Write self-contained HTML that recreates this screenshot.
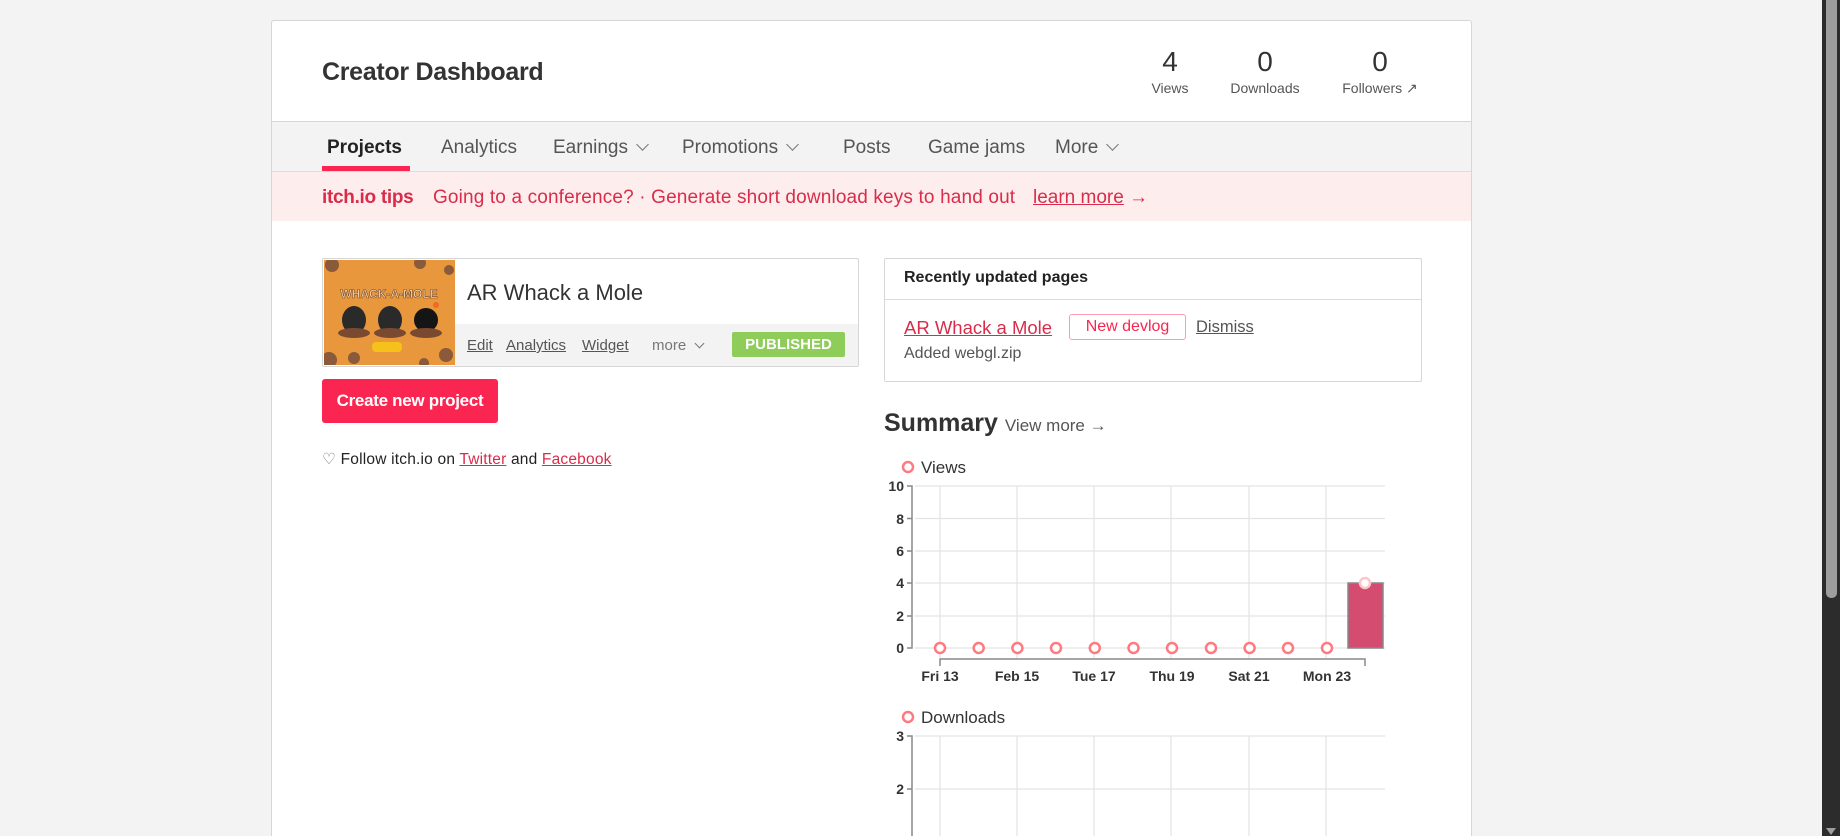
<!DOCTYPE html>
<html style="overflow:hidden;height:836px"><head><meta charset="utf-8"><style>
*{margin:0;padding:0;box-sizing:border-box}
body{width:1840px;height:836px;background:#f3f3f3;font-family:"Liberation Sans",sans-serif;color:#434343;position:relative;overflow:hidden}
.a{position:absolute;white-space:nowrap}
.panel{position:absolute;left:271px;top:20px;width:1201px;height:816px;background:#fff;border:1px solid #d6d6d6;border-bottom:0;border-radius:3px 3px 0 0}
.nav{position:absolute;left:272px;top:121px;width:1199px;height:51px;background:#f3f3f3;border-top:1px solid #d6d6d6;border-bottom:1px solid #dcdcdc}
.tips{position:absolute;left:272px;top:172px;width:1199px;height:49px;background:#fdeded}
.navi{font-size:19px;color:#555;top:137px}
.chev{display:inline-block;width:9px;height:9px;border-right:1.6px solid #777;border-bottom:1.6px solid #777;transform:rotate(45deg);margin-left:10px;position:relative;top:-4px}
.u{text-decoration:underline}
</style></head><body>
<div class="panel"></div>
<div class="a" style="left:322px;top:58px;font-size:25px;font-weight:bold;color:#333;letter-spacing:-0.3px">Creator Dashboard</div>

<div class="a" style="left:1120px;width:100px;text-align:center;top:46px;font-size:28px;color:#333">4</div>
<div class="a" style="left:1120px;width:100px;text-align:center;top:80px;font-size:14px;color:#555">Views</div>
<div class="a" style="left:1205px;width:120px;text-align:center;top:46px;font-size:28px;color:#333">0</div>
<div class="a" style="left:1205px;width:120px;text-align:center;top:80px;font-size:14px;color:#555">Downloads</div>
<div class="a" style="left:1320px;width:120px;text-align:center;top:46px;font-size:28px;color:#333">0</div>
<div class="a" style="left:1320px;width:120px;text-align:center;top:80px;font-size:14px;color:#555">Followers ↗</div>

<div class="nav"></div>
<div class="a navi" style="left:327px;font-weight:bold;color:#222">Projects</div>
<div class="a" style="left:322px;top:166px;width:88px;height:5px;background:#fa2550"></div>
<div class="a navi" style="left:441px">Analytics</div>
<div class="a navi" style="left:553px">Earnings<span class="chev"></span></div>
<div class="a navi" style="left:682px">Promotions<span class="chev"></span></div>
<div class="a navi" style="left:843px">Posts</div>
<div class="a navi" style="left:928px">Game jams</div>
<div class="a navi" style="left:1055px">More<span class="chev"></span></div>

<div class="tips"></div>
<div class="a" style="left:322px;top:187px;font-size:19px;font-weight:bold;color:#da2c4a;letter-spacing:-0.3px">itch.io tips</div>
<div class="a" style="left:433px;top:187px;font-size:19px;color:#da2c4a;letter-spacing:0.15px">Going to a conference? · Generate short download keys to hand out</div>
<div class="a" style="left:1033px;top:187px;font-size:19px;color:#da2c4a"><span class="u">learn more</span> →</div>

<!-- project card -->
<div class="a" style="left:322px;top:258px;width:537px;height:109px;border:1px solid #d6d6d6;border-radius:2px"></div>
<div class="a" style="left:455px;top:324px;width:403px;height:42px;background:#f3f3f3"></div>
<svg class="a" style="left:324px;top:260px" width="131" height="105" viewBox="0 0 131 105">
<rect width="131" height="105" fill="#e8973c"/>
<circle cx="8" cy="5" r="7" fill="#8a5a3a"/><circle cx="96" cy="3" r="6" fill="#8a5a3a"/><circle cx="125" cy="10" r="5" fill="#8a5a3a"/>
<circle cx="5" cy="100" r="8" fill="#8a5a3a"/><circle cx="30" cy="98" r="6" fill="#8a5a3a"/><circle cx="122" cy="95" r="7" fill="#8a5a3a"/><circle cx="100" cy="103" r="5" fill="#8a5a3a"/>
<text x="65" y="38" text-anchor="middle" font-size="12" font-weight="bold" fill="#f4d7b0" stroke="#7a4a2a" stroke-width=".6" font-family="Liberation Sans">WHACK-A-MOLE</text>
<ellipse cx="30" cy="60" rx="12" ry="14" fill="#2a2a2a"/><ellipse cx="30" cy="73" rx="16" ry="5" fill="#7a4a30"/>
<ellipse cx="66" cy="60" rx="12" ry="14" fill="#2a2a2a"/><ellipse cx="66" cy="73" rx="16" ry="5" fill="#7a4a30"/>
<circle cx="102" cy="60" r="12" fill="#151515"/><ellipse cx="102" cy="73" rx="16" ry="5" fill="#7a4a30"/>
<circle cx="112" cy="45" r="3" fill="#f06a20"/>
<rect x="48" y="82" width="30" height="10" rx="4" fill="#f5c11a"/>
</svg>
<div class="a" style="left:467px;top:280px;font-size:22px;color:#333">AR Whack a Mole</div>
<div class="a u" style="left:467px;top:337px;font-size:15px;color:#555">Edit</div>
<div class="a u" style="left:506px;top:337px;font-size:15px;color:#555">Analytics</div>
<div class="a u" style="left:582px;top:337px;font-size:15px;color:#555">Widget</div>
<div class="a" style="left:652px;top:337px;font-size:15px;color:#777">more<span class="chev" style="width:7px;height:7px;top:-3px"></span></div>
<div class="a" style="left:732px;top:332px;width:113px;height:25px;background:#8fcd5a;border-radius:2px;color:#fff;font-weight:bold;font-size:15px;text-align:center;line-height:25px">PUBLISHED</div>

<div class="a" style="left:322px;top:379px;width:176px;height:44px;background:#fa2550;border-radius:3px;color:#fff;font-weight:bold;font-size:17px;text-align:center;line-height:44px;letter-spacing:-0.3px">Create new project</div>
<div class="a" style="left:322px;top:450px;font-size:15.5px;color:#222;letter-spacing:0.2px"><span style="color:#777">♡</span> Follow itch.io on <span class="u" style="color:#da2c4a">Twitter</span> and <span class="u" style="color:#da2c4a">Facebook</span></div>

<!-- recent card -->
<div class="a" style="left:884px;top:258px;width:538px;height:124px;border:1px solid #d6d6d6;border-radius:2px"></div>
<div class="a" style="left:885px;top:299px;width:536px;height:1px;background:#dcdcdc"></div>
<div class="a" style="left:904px;top:269px;font-size:16px;font-weight:bold;color:#222">Recently updated pages</div>
<div class="a u" style="left:904px;top:317px;font-size:18.5px;color:#da2c4a">AR Whack a Mole</div>
<div class="a" style="left:1069px;top:314px;width:117px;height:26px;border:1px solid #ff9bb0;border-radius:3px;color:#fa2550;font-size:16px;text-align:center;line-height:24px">New devlog</div>
<div class="a u" style="left:1196px;top:318px;font-size:16.5px;color:#555">Dismiss</div>
<div class="a" style="left:904px;top:345px;font-size:16px;color:#555">Added webgl.zip</div>

<div class="a" style="left:884px;top:409px;font-size:25px;font-weight:bold;color:#333">Summary <span style="font-size:17px;font-weight:normal;color:#555">View more →</span></div>

<svg class="a" style="left:880px;top:455px" width="520" height="381">
<g font-family="Liberation Sans">
<circle cx="28" cy="12" r="5" fill="none" stroke="#ff7a80" stroke-width="2.5"/>
<text x="41" y="18" font-size="17" fill="#333">Views</text>
<g stroke="#e3e3e3" stroke-width="1.2">
<line x1="35" y1="31" x2="505" y2="31"/><line x1="35" y1="63.5" x2="505" y2="63.5"/><line x1="35" y1="96" x2="505" y2="96"/><line x1="35" y1="128" x2="505" y2="128"/><line x1="35" y1="161" x2="505" y2="161"/><line x1="35" y1="193" x2="505" y2="193"/>
<line x1="60" y1="31" x2="60" y2="203"/><line x1="137" y1="31" x2="137" y2="203"/><line x1="214" y1="31" x2="214" y2="203"/><line x1="291" y1="31" x2="291" y2="203"/><line x1="369" y1="31" x2="369" y2="203"/><line x1="446" y1="31" x2="446" y2="203"/>
</g>
<g stroke="#888" stroke-width="1.5" fill="none">
<path d="M27 31H32V193H27M27 63.5H32M27 96H32M27 128H32M27 161H32"/>
<path d="M60 211V204H485V211M60 204V211"/>
</g>
<g font-size="14" font-weight="bold" fill="#333" text-anchor="end">
<text x="24" y="36">10</text><text x="24" y="69">8</text><text x="24" y="101">6</text><text x="24" y="133">4</text><text x="24" y="166">2</text><text x="24" y="198">0</text>
</g>
<rect x="468" y="128" width="35" height="65" fill="#d44d71" stroke="#888" stroke-width="1.5"/>
<g fill="#fff" stroke="#ff7a80" stroke-width="2.5">
<circle cx="60" cy="193" r="5"/><circle cx="98.7" cy="193" r="5"/><circle cx="137.4" cy="193" r="5"/><circle cx="176" cy="193" r="5"/><circle cx="214.8" cy="193" r="5"/><circle cx="253.5" cy="193" r="5"/><circle cx="292" cy="193" r="5"/><circle cx="331" cy="193" r="5"/><circle cx="369.6" cy="193" r="5"/><circle cx="408" cy="193" r="5"/><circle cx="447" cy="193" r="5"/>
<circle cx="485" cy="128" r="5" stroke="#ffc5c8"/>
</g>
<g font-size="14" font-weight="bold" fill="#333" text-anchor="middle">
<text x="60" y="226">Fri 13</text><text x="137" y="226">Feb 15</text><text x="214" y="226">Tue 17</text><text x="292" y="226">Thu 19</text><text x="369" y="226">Sat 21</text><text x="447" y="226">Mon 23</text>
</g>
<circle cx="28" cy="262" r="5" fill="none" stroke="#ff7a80" stroke-width="2.5"/>
<text x="41" y="268" font-size="17" fill="#333">Downloads</text>
<g stroke="#e3e3e3" stroke-width="1.2">
<line x1="35" y1="281" x2="505" y2="281"/><line x1="35" y1="334" x2="505" y2="334"/>
<line x1="60" y1="281" x2="60" y2="381"/><line x1="137" y1="281" x2="137" y2="381"/><line x1="214" y1="281" x2="214" y2="381"/><line x1="291" y1="281" x2="291" y2="381"/><line x1="369" y1="281" x2="369" y2="381"/><line x1="446" y1="281" x2="446" y2="381"/>
</g>
<path d="M27 281H32V381M27 334H32" stroke="#888" stroke-width="1.5" fill="none"/>
<g font-size="14" font-weight="bold" fill="#333" text-anchor="end"><text x="24" y="286">3</text><text x="24" y="339">2</text></g>
</g>
</svg>

<div class="a" style="left:1822px;top:0;width:18px;height:836px;background:#2c2c2c"></div>
<div class="a" style="left:1826px;top:0;width:11px;height:598px;background:#9e9e9e;border-radius:0 0 5px 5px"></div>
<div class="a" style="left:1826px;top:828px;width:0;height:0;border-left:5px solid transparent;border-right:5px solid transparent;border-top:7px solid #9e9e9e"></div>
</body></html>
